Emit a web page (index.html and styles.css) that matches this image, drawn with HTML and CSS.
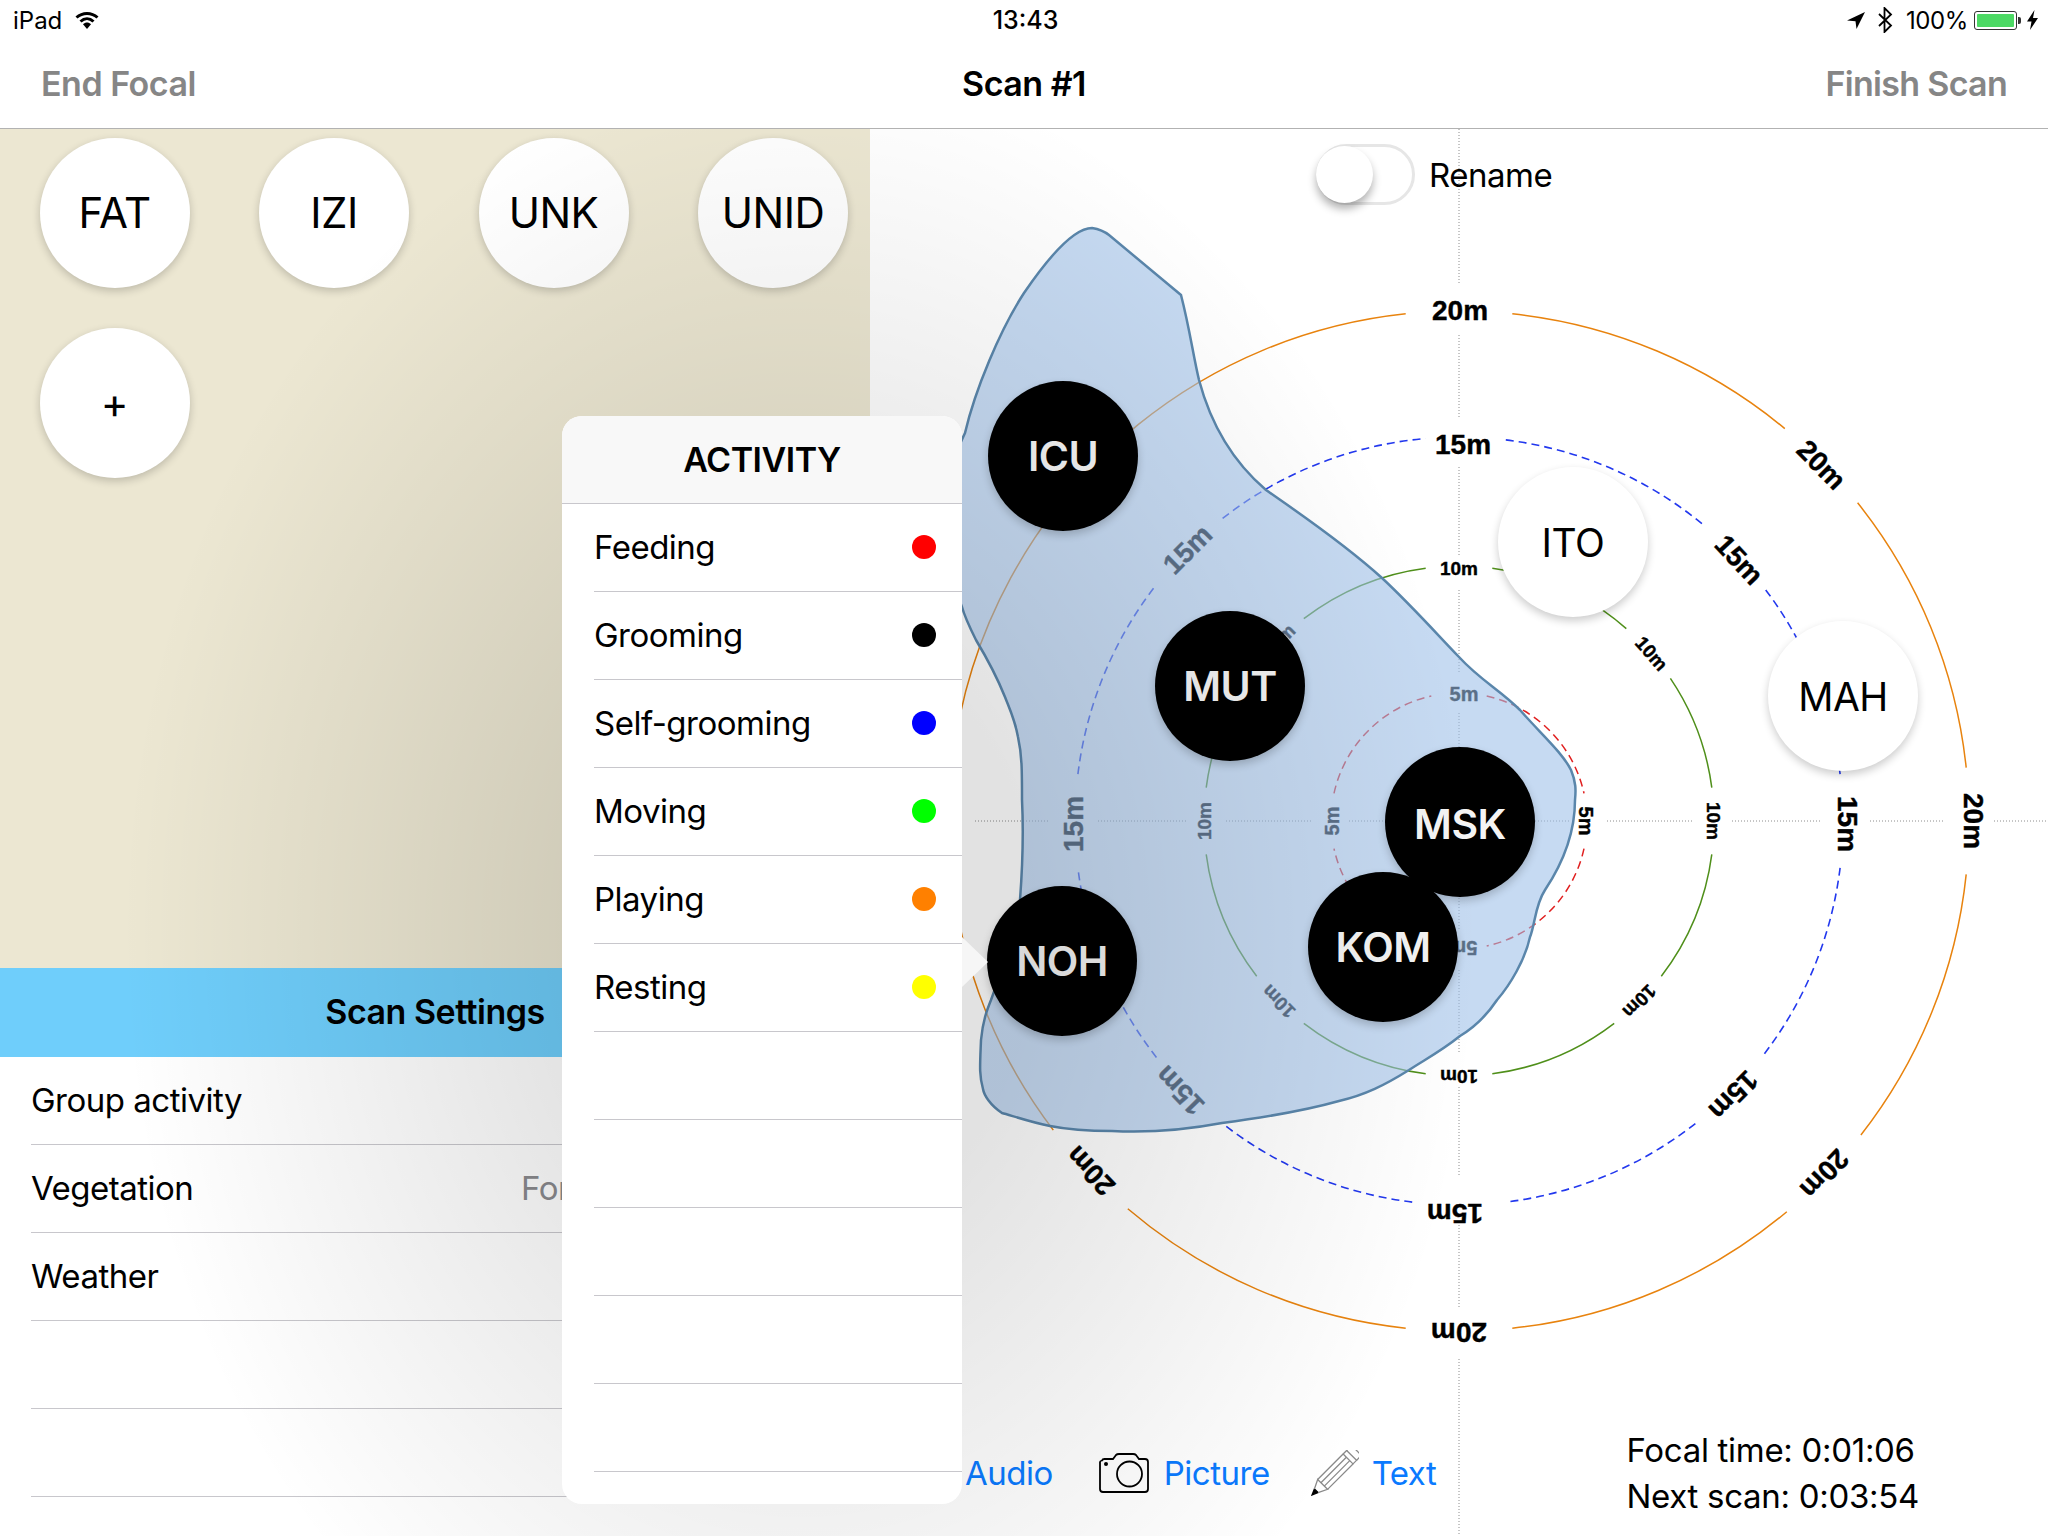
FILE: index.html
```html
<!DOCTYPE html>
<html lang="en">
<head>
  <meta charset="UTF-8">
  <title>Scan #1</title>
  <link rel="stylesheet" href="styles.css">
</head>
<body>

  <div class="status-bar">
    <div class="status-left">
      <span>iPad</span>
      <svg class="wifi" width="24" height="18" viewBox="0 0 24 18">
        <path d="M1.5 6.5C7.5 1 16.5 1 22.5 6.5" fill="none" stroke="#000" stroke-width="3"/>
        <path d="M5.5 10.5C9.5 6.8 14.5 6.8 18.5 10.5" fill="none" stroke="#000" stroke-width="3"/>
        <path d="M8 13.2C10.5 11 13.5 11 16 13.2L12 18Z" fill="#000"/>
      </svg>
    </div>
    <div class="status-time">13:43</div>
    <div class="status-right">
      <svg width="18" height="17" viewBox="0 0 18 17"><path d="M18 0L0 8.5L8.5 9.3L9.5 17Z" fill="#000"/></svg>
      <svg class="bluetooth" width="16" height="26" viewBox="0 0 16 26"><path d="M2 7L14 18.5L7.5 25V1L14 7.5L2 19" fill="none" stroke="#000" stroke-width="1.8"/></svg>
      <span class="percent">100%</span>
      <div class="battery"><div class="battery-fill"></div></div>
      <div class="battery-nub"></div>
      <svg class="bolt" width="11" height="20" viewBox="0 0 11 20"><path d="M7.5 0L0 11.5H4.5L3 20L11 8H6Z" fill="#000"/></svg>
    </div>
  </div>

  <div class="nav-bar">
    <div class="nav-action">End Focal</div>
    <div class="nav-title">Scan #1</div>
    <div class="nav-action nav-right">Finish Scan</div>
  </div>

  <div class="content">
    <div class="left-col">
      <div class="animal-panel">
        <div class="animal">FAT</div>
        <div class="animal">IZI</div>
        <div class="animal">UNK</div>
        <div class="animal">UNID</div>
        <div class="animal">+</div>
      </div>
      <div class="settings-head">Scan Settings</div>
      <div class="settings-row">Group activity</div>
      <div class="settings-row">Vegetation<span class="row-value">Forest</span></div>
      <div class="settings-row">Weather</div>
      <div class="settings-row"></div>
      <div class="settings-row"></div>
    </div>

    <div class="map">
      <svg class="rings" width="1178" height="1407" viewBox="870 129 1178 1407">
        <defs>
          <path id="arc15" d="M46.8 -381.1A384 384 0 0 1 236.4 -302.6"/>
          <path id="arc10" d="M33.3 -252.8A255 255 0 0 1 155.2 -202.3"/>
          <path id="arc5" d="M27.7 -125A128 128 0 0 1 125 -27.7"/>
        </defs>
        <g transform="translate(1459 821)">
          <path class="cross" d="M0 -108V0M0 -149V-233M0 -266V-354M0 -404V-488M0 -538V-693M0 108V0M0 149V233M0 266V354M0 404V488M0 538V715"/>
          <path class="cross" d="M110 0H0M148 0H235M273 0H363M411 0H485M535 0H589M-110 0H0M-148 0H-235M-273 0H-363M-411 0H-485"/>

          <g class="ring ring20">
            <path d="M53.3 -507.2A510 510 0 0 1 325.8 -392.4M398.6 -318.2A510 510 0 0 1 507.2 -53.3"/>
            <path d="M507.2 53.3A510 510 0 0 1 401.9 314M327.8 390.7A510 510 0 0 1 53.3 507.2"/>
            <path d="M-53.3 507.2A510 510 0 0 1 -331.2 387.8M-405.7 309.1A510 510 0 0 1 -507.2 53.3"/>
            <path d="M-507.2 -53.3A510 510 0 0 1 -320.9 -396.3M-320.9 -396.3A510 510 0 0 1 -53.3 -507.2"/>
          </g>
          <g class="ring ring15">
            <path d="M46.8 -381.1A384 384 0 0 1 244.3 -296.3"/>
            <path d="M306.7 -231.1A384 384 0 0 1 381.1 -46.8"/>
            <use href="#arc15" transform="rotate(90)"/>
            <use href="#arc15" transform="rotate(135)"/>
            <use href="#arc15" transform="rotate(180)"/>
            <use href="#arc15" transform="rotate(225)"/>
            <use href="#arc15" transform="rotate(270)"/>
            <path d="M-236.4 -302.6A384 384 0 0 1 -33.5 -382.5"/>
          </g>
          <g class="ring ring10">
            <path d="M33.3 -252.8A255 255 0 0 1 167.3 -192.4"/>
            <path d="M211.4 -142.6A255 255 0 0 1 252.8 -33.3"/>
            <use href="#arc10" transform="rotate(90)"/>
            <use href="#arc10" transform="rotate(135)"/>
            <use href="#arc10" transform="rotate(180)"/>
            <use href="#arc10" transform="rotate(225)"/>
            <use href="#arc10" transform="rotate(270)"/>
            <use href="#arc10" transform="rotate(315)"/>
          </g>
          <g class="ring ring5">
            <use href="#arc5"/>
            <use href="#arc5" transform="rotate(90)"/>
            <use href="#arc5" transform="rotate(180)"/>
            <use href="#arc5" transform="rotate(270)"/>
          </g>

          <g class="big-label">
            <text transform="translate(1 -511)">20m</text>
            <text transform="rotate(45.5) translate(0 -508)">20m</text>
            <text transform="rotate(90) translate(0 -514)">20m</text>
            <text transform="rotate(134) translate(0 -508)">20m</text>
            <text transform="rotate(180) translate(0 -511)">20m</text>
            <text transform="rotate(226.5) translate(0 -508)">20m</text>
            <text transform="rotate(315) translate(0 -508)">20m</text>
            <text transform="translate(4 -377)">15m</text>
            <text transform="rotate(47) translate(0 -383)">15m</text>
            <text transform="rotate(90) translate(3 -388)">15m</text>
            <text transform="rotate(135) translate(0 -388)">15m</text>
            <text transform="rotate(180) translate(4 -392)">15m</text>
            <text transform="rotate(226) translate(0 -388)">15m</text>
            <text transform="rotate(270) translate(-3 -386)">15m</text>
            <text transform="rotate(315) translate(0 -384)">15m</text>
          </g>
          <g class="small-label">
            <text transform="translate(0 -253)">10m</text>
            <text transform="rotate(49) translate(0 -255)">10m</text>
            <text transform="rotate(90) translate(0 -254)">10m</text>
            <text transform="rotate(135) translate(0 -255)">10m</text>
            <text transform="rotate(180) translate(0 -255)">10m</text>
            <text transform="rotate(225) translate(0 -255)">10m</text>
            <text transform="rotate(270) translate(0 -255)">10m</text>
            <text transform="rotate(315) translate(0 -255)">10m</text>
          </g>
          <g class="tiny-label">
            <text transform="translate(5 -127)">5m</text>
            <text transform="rotate(90) translate(0 -127)">5m</text>
            <text transform="rotate(180) translate(-4 -127)">5m</text>
            <text transform="rotate(270) translate(0 -127)">5m</text>
          </g>

          <path class="zone" transform="translate(-1459 -821)" d="M1092 228C1098 229 1104 231 1109 235L1181 295C1190 330 1193 355 1199 380C1207 410 1225 455 1266 490C1290 507 1340 540 1382 578C1410 604 1435 632 1459 657C1480 680 1500 690 1520 710C1540 733 1562 752 1571 770C1576 782 1576 790 1575 800C1575 830 1565 860 1545 890C1535 905 1535 925 1530 937C1525 960 1510 985 1497 1000C1485 1018 1470 1030 1460 1036C1440 1052 1424 1060 1409 1070C1385 1085 1365 1095 1339 1101C1300 1112 1260 1118 1222 1123C1185 1130 1150 1133 1112 1131C1085 1131 1070 1130 1050 1126C1030 1122 1010 1115 1002 1113C990 1105 984 1095 983 1089C979 1075 980 1065 981 1040C983 1020 987 1010 991 1000C1005 960 1020 930 1020 900C1023 860 1023 820 1022 800C1022 770 1022 755 1018 737C1015 720 1010 710 1005 697C995 672 985 655 976 640C970 628 965 618 962 607C955 590 945 560 945 520C945 470 955 455 965 433C975 390 1000 330 1024 293C1050 255 1075 228 1092 228Z"/>
        </g>
      </svg>

      <div class="rename-row">
        <div class="switch"><div class="knob"></div></div>
        <span>Rename</span>
      </div>

      <div class="node node-black node-icu">ICU</div>
      <div class="node node-black node-mut">MUT</div>
      <div class="node node-black node-msk">MSK</div>
      <div class="node node-black node-kom">KOM</div>
      <div class="node node-black node-noh">NOH</div>
      <div class="node node-white node-ito">ITO</div>
      <div class="node node-white node-mah">MAH</div>

      <div class="map-footer">
        <span class="tool-link">Audio</span>
        <svg class="camera" width="50" height="40" viewBox="0 0 50 40">
          <path d="M3 7.5Q3.5 6 5.5 6H14L17 2Q18 1 20 1H34Q36 1 37 2L40 6H46Q49 6 49 9V36Q49 39 46 39H4Q1 39 1 36V9Q1 8 3 7.5Z" fill="none" stroke="#000" stroke-width="1.8"/>
          <circle cx="30.5" cy="21" r="12.5" fill="none" stroke="#000" stroke-width="1.8"/>
          <circle cx="7" cy="11" r="2" fill="#000"/>
        </svg>
        <span class="tool-link">Picture</span>
        <svg class="pencil" width="48" height="46" viewBox="0 0 48 46">
          <g transform="translate(1 45) rotate(45)" fill="none" stroke="#8a8a8a" stroke-width="1.3">
            <path d="M-2.6 -6L0 0L2.6 -6Z" fill="#000" stroke="#000"/>
            <path d="M-2.6 -6L-7 -15H7L2.6 -6"/>
            <path d="M-7 -15V-51H7V-15M-2.4 -15V-51M2.4 -15V-51"/>
            <path d="M-7 -51V-56H7V-51"/>
            <path d="M-7 -56V-59Q-7 -63 -3 -63H3Q7 -63 7 -59V-56"/>
          </g>
        </svg>
        <span class="tool-link">Text</span>
        <div class="timers">
          <div>Focal time: 0:01:06</div>
          <div>Next scan: 0:03:54</div>
        </div>
      </div>
    </div>

    <div class="dim"></div>

    <div class="popover">
      <div class="popover-arrow"></div>
      <div class="popover-head">ACTIVITY</div>
      <div class="activity-row">Feeding<span class="dot dot-red"></span></div>
      <div class="activity-row">Grooming<span class="dot dot-black"></span></div>
      <div class="activity-row">Self-grooming<span class="dot dot-blue"></span></div>
      <div class="activity-row">Moving<span class="dot dot-green"></span></div>
      <div class="activity-row">Playing<span class="dot dot-orange"></span></div>
      <div class="activity-row">Resting<span class="dot dot-yellow"></span></div>
      <div class="activity-row"></div>
      <div class="activity-row"></div>
      <div class="activity-row"></div>
      <div class="activity-row"></div>
      <div class="activity-row"></div>
    </div>
  </div>

</body>
</html>
```

FILE: styles.css
```css
* {
  box-sizing: border-box;
}
html, body {
  margin: 0;
  height: 100%;
}
body {
  width: 2048px;
  height: 1536px;
  overflow: hidden;
  background: #fff;
  color: #000;
  font-family: Inter, "Noto Sans", sans-serif;
  font-size: 33px;
  letter-spacing: -0.5px;
}

/* status bar */
.status-bar {
  height: 40px;
  padding: 0 10px 0 13px;
  display: grid;
  grid-template-columns: 1fr auto 1fr;
  align-items: center;
  font-size: 24px;
  letter-spacing: 0;
}
.status-left {
  display: flex;
  align-items: center;
  gap: 13px;
}
.status-time {
  font-size: 25px;
  font-weight: 500;
}
.status-right {
  display: flex;
  align-items: center;
  justify-content: flex-end;
}
.bluetooth {
  margin-left: 12px;
}
.percent {
  margin-left: 13px;
  letter-spacing: -0.4px;
}
.battery {
  width: 43px;
  height: 19px;
  margin-left: 6px;
  padding: 2px;
  border: 1.5px solid #333;
  border-radius: 3px;
}
.battery-fill {
  height: 100%;
  background: #4cd964;
  border-radius: 1px;
}
.battery-nub {
  width: 3px;
  height: 7px;
  margin-left: 1px;
  background: #333;
  border-radius: 0 2px 2px 0;
}
.bolt {
  margin-left: 6px;
}

/* nav */
.nav-bar {
  height: 89px;
  padding: 0 41px 1px;
  display: grid;
  grid-template-columns: 1fr auto 1fr;
  align-items: center;
  border-bottom: 1px solid #b2b2b2;
  font-size: 34px;
  font-weight: 600;
}
.nav-action {
  color: #868686;
}
.nav-right {
  text-align: right;
  letter-spacing: -0.7px;
}

.content {
  position: relative;
  height: 1407px;
  display: flex;
  overflow: hidden;
}

/* left column */
.left-col {
  width: 870px;
  flex-shrink: 0;
}
.animal-panel {
  height: 839px;
  padding: 9px 0 0 39.5px;
  display: grid;
  grid-template-columns: repeat(4, 150px);
  grid-auto-rows: 150px;
  column-gap: 69.5px;
  row-gap: 40px;
  align-content: start;
  background: #ece7d2;
}
.animal {
  display: flex;
  align-items: center;
  justify-content: center;
  padding-bottom: 1px;
  border-radius: 50%;
  background: #fff;
  box-shadow: 0 3px 8px rgba(0, 0, 0, 0.2);
  font-size: 42px;
  letter-spacing: -0.5px;
}
.settings-head {
  height: 89px;
  padding-bottom: 2px;
  display: flex;
  align-items: center;
  justify-content: center;
  background: #6fcefb;
  font-size: 34px;
  font-weight: 600;
}
.settings-row {
  height: 88px;
  margin-left: 31px;
  padding-bottom: 2px;
  display: flex;
  align-items: center;
  border-bottom: 1px solid #c8c7cc;
}
.row-value {
  width: 349px;
  margin-left: auto;
  color: #8a8a8e;
}

/* map */
.map {
  position: relative;
  flex: 1;
  display: flex;
  flex-direction: column;
  justify-content: space-between;
}
.rings {
  position: absolute;
  left: 0;
  top: 0;
}
.cross {
  fill: none;
  stroke: #8c8c8c;
  stroke-width: 1;
  stroke-dasharray: 1 2;
}
.ring {
  fill: none;
}
.ring20 {
  stroke: #e8830e;
  stroke-width: 1.5;
}
.ring15 {
  stroke: #2238ee;
  stroke-width: 1.6;
  stroke-dasharray: 8 5;
}
.ring10 {
  stroke: #4f8f1a;
  stroke-width: 1.5;
}
.ring5 {
  stroke: #e01f1f;
  stroke-width: 1.5;
  stroke-dasharray: 8 5;
}
.big-label text, .small-label text, .tiny-label text {
  font-family: "Liberation Sans", Arial, sans-serif;
  font-weight: 700;
  text-anchor: middle;
  letter-spacing: 0;
  stroke: #000;
  stroke-width: 0.4;
  dominant-baseline: central;
}
.big-label text {
  font-size: 28px;
}
.small-label text {
  font-size: 19px;
}
.tiny-label text {
  font-size: 20px;
}
.zone {
  fill: #9cbfe8;
  fill-opacity: 0.58;
  stroke: #5a86ab;
  stroke-width: 2.5;
}

.rename-row {
  position: relative;
  margin: 15px 0 0 446px;
  display: flex;
  align-items: center;
  gap: 14px;
}
.switch {
  width: 99px;
  height: 61px;
  padding: 2px 0;
  border: 3px solid #e6e6e6;
  border-radius: 31px;
  background: #fff;
}
.knob {
  width: 57px;
  height: 57px;
  margin-left: -3px;
  margin-top: -3px;
  border-radius: 50%;
  background: #fff;
  box-shadow: 0 6px 9px rgba(0, 0, 0, 0.3);
}

.node {
  position: absolute;
  width: 150px;
  height: 150px;
  display: flex;
  align-items: center;
  justify-content: center;
  border-radius: 50%;
  box-shadow: 0 4px 9px rgba(0, 0, 0, 0.2);
}
.node-black {
  background: #000;
  color: #f4f4f4;
  font-size: 41px;
  font-weight: 600;
}
.node-white {
  background: #fff;
  padding-top: 1px;
  font-size: 39px;
}
.node-icu { left: 118px; top: 252px; }
.node-mut { left: 285px; top: 482px; }
.node-msk { left: 515px; top: 618px; padding-top: 3px; }
.node-kom { left: 438px; top: 743px; }
.node-noh { left: 117px; top: 757px; }
.node-ito { left: 628px; top: 338px; }
.node-mah { left: 898px; top: 492px; }

.map-footer {
  position: relative;
  padding: 0 129px 17px 95px;
  display: flex;
  align-items: center;
}
.tool-link {
  color: #0a7aff;
}
.camera {
  margin: 0 15px 0 46px;
}
.pencil {
  margin: 0 13px 0 41px;
}
.timers {
  margin-left: auto;
  line-height: 46px;
  letter-spacing: -0.3px;
}

/* popover dim */
.dim {
  position: absolute;
  left: 0;
  top: 0;
  right: 0;
  bottom: 0;
  background: radial-gradient(680px 870px at 800px 801px, rgba(0, 0, 0, 0.115) 35%, rgba(0, 0, 0, 0) 100%);
}

/* activity popover */
.popover {
  position: absolute;
  left: 562px;
  top: 287px;
  width: 400px;
  height: 1088px;
  background: #fff;
  border-radius: 20px;
}
.popover-arrow {
  position: absolute;
  left: 400px;
  top: 521px;
  width: 26px;
  height: 50px;
  background: #f6f6f6;
  clip-path: polygon(0 0, 100% 50%, 0 100%);
}
.popover-head {
  height: 88px;
  display: flex;
  align-items: center;
  justify-content: center;
  background: #f8f8f8;
  border-radius: 20px 20px 0 0;
  border-bottom: 1px solid #c8c7cc;
  font-size: 34px;
  font-weight: 600;
}
.activity-row {
  height: 88px;
  margin-left: 32px;
  padding: 0 26px 2px 0;
  display: flex;
  align-items: center;
  justify-content: space-between;
  border-bottom: 1px solid #c8c7cc;
}
.dot {
  width: 24px;
  height: 24px;
  border-radius: 50%;
}
.dot-red { background: #f00; }
.dot-black { background: #000; }
.dot-blue { background: #00f; }
.dot-green { background: #0f0; }
.dot-orange { background: #ff8000; }
.dot-yellow { background: #ff0; }
```
